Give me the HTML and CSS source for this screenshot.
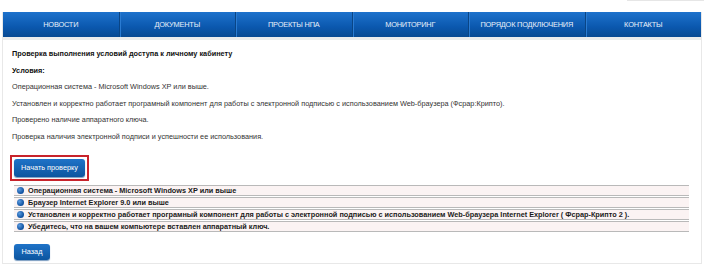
FILE: index.html
```html
<!DOCTYPE html>
<html lang="ru">

<head>
    <meta charset="UTF-8">
    <meta name="viewport" content="width=device-width, initial-scale=1.0">
    <title>Проверка выполнения условий доступа</title>
    <link rel="stylesheet" href="styles.css">
</head>

<body>

    <div class="top-strip"></div>

    <div class="page">
        <!-- Main menu -->
        <ul class="menu">
            <li>Новости</li>
            <li>Документы</li>
            <li>Проекты НПА</li>
            <li>Мониторинг</li>
            <li>Порядок подключения</li>
            <li>Контакты</li>
        </ul>

        <div class="content">
            <p class="title">Проверка выполнения условий доступа к личному кабинету</p>
            <p class="title">Условия:</p>
            <p>Операционная система - Microsoft Windows XP или выше.</p>
            <p>Установлен и корректно работает програмный компонент для работы с электронной подписью с использованием Web-браузера (Фсрар:Крипто).</p>
            <p>Проверено наличие аппаратного ключа.</p>
            <p>Проверка наличия электронной подписи и успешности ее использования.</p>

            <div class="check-box">
                <button class="btn btn-check">Начать проверку</button>
            </div>

            <ul class="checks">
                <li><span class="dot"></span>Операционная система - Microsoft Windows XP или выше</li>
                <li><span class="dot"></span>Браузер Internet Explorer 9.0 или выше</li>
                <li><span class="dot"></span>Установлен и корректно работает програмный компонент для работы с электронной подписью с использованием Web-браузера Internet Explorer ( Фсрар-Крипто 2 ).</li>
                <li><span class="dot"></span>Убедитесь, что на вашем компьютере вставлен аппаратный ключ.</li>
            </ul>

            <button class="btn btn-back">Назад</button>
        </div>
    </div>

</body>

</html>
```

FILE: styles.css
```css
body {
    margin: 0;
    font-family: "Liberation Sans", Arial, sans-serif;
    font-size: 7.3px;
    color: #333;
    background: #fff;
}

.top-strip {
    height: 12px;
    margin-left: 627px;
    border-top: 1px solid #e6e6e6;
    box-sizing: border-box;
}

.page {
    margin: 0 2px 0 2px;
    height: 252px;
    border: 1px solid #e8e8e8;
    border-top: none;
    box-sizing: border-box;
}

/* blue menu bar */
.menu {
    display: flex;
    margin: 0;
    padding: 0;
    list-style: none;
    height: 25px;
    background: linear-gradient(#1e72cc, #0b58ae 60%, #094a92);
    border-bottom: 3px solid #ececec;
}

.menu li {
    flex: 1;
    display: flex;
    align-items: center;
    justify-content: center;
    color: #e8f0fa;
    text-transform: uppercase;
    font-size: 7.4px;
    letter-spacing: -0.2px;
    border-left: 1px solid #0a4585;
    box-shadow: inset 1px 0 0 #2a7bd2;
}

.menu li:first-child {
    border-left: none;
    box-shadow: none;
}

.content {
    padding: 6px 10px 0 9px;
}

.content p {
    margin: 0;
    line-height: 16.6px;
}

.content p.title {
    font-weight: bold;
    color: #111;
}

.check-box {
    display: inline-block;
    margin: 9px 0 0 -2px;
    padding: 2px;
    border: 2px solid #c8232b;
}

.btn {
    display: block;
    padding: 0;
    border: none;
    border-radius: 3px;
    background: linear-gradient(#1f73c8, #0c559f);
    color: #fff;
    font-family: "Liberation Sans", Arial, sans-serif;
    font-size: 7.3px;
    white-space: nowrap;
    cursor: pointer;
    box-shadow: 0 1px 1px #7a9cc0;
}

.btn-check {
    width: 71px;
    height: 18px;
}

.btn-back {
    width: 36px;
    height: 16px;
    margin: 12px 0 0 2px;
}

.checks {
    margin: 4px 0 0 2px;
    padding: 0;
    list-style: none;
    width: 675px;
}

.checks li {
    display: flex;
    align-items: center;
    height: 9px;
    margin-bottom: 1px;
    border-top: 1px solid #b9b9b9;
    border-bottom: 1px solid #b9b9b9;
    background: #fbf3f3;
    font-weight: bold;
    color: #1a1a1a;
    white-space: nowrap;
}

.dot {
    width: 7px;
    height: 7px;
    margin: 0 4px 0 3px;
    border-radius: 50%;
    background: radial-gradient(circle at 35% 35%, #5b9be0, #0d4f9e 70%);
    flex-shrink: 0;
}
```
